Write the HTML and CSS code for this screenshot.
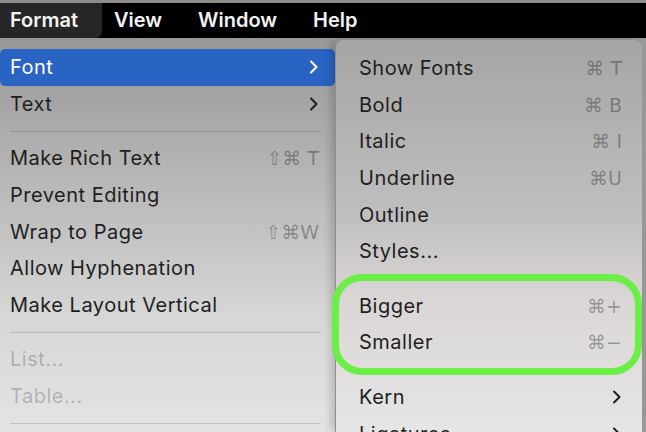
FILE: index.html
```html
<!DOCTYPE html>
<html lang="en">
  <head>
    <meta charset="UTF-8" />
    <meta name="viewport" content="width=device-width, initial-scale=1.0" />
    <title>Format Menu</title>
    <link rel="stylesheet" href="styles.css">
  </head>
  <body>
    <div class="topbar">
      <div class="bar-item active">Format</div>
      <div class="bar-item">View</div>
      <div class="bar-item">Window</div>
      <div class="bar-item">Help</div>
    </div>

    <div class="main">
      <!-- left: Format menu -->
      <div class="menu">
        <div class="row selected">
          <span>Font</span>
          <svg class="chev" width="10" height="14" viewBox="0 0 10 14"><path d="M2 1.5 L7.5 7 L2 12.5" /></svg>
        </div>
        <div class="row">
          <span>Text</span>
          <svg class="chev" width="10" height="14" viewBox="0 0 10 14"><path d="M2 1.5 L7.5 7 L2 12.5" /></svg>
        </div>
        <div class="sep"></div>
        <div class="row"><span>Make Rich Text</span><span class="key">⇧⌘ T</span></div>
        <div class="row"><span>Prevent Editing</span></div>
        <div class="row"><span>Wrap to Page</span><span class="key">⇧⌘W</span></div>
        <div class="row"><span>Allow Hyphenation</span></div>
        <div class="row"><span>Make Layout Vertical</span></div>
        <div class="sep"></div>
        <div class="row disabled"><span>List...</span></div>
        <div class="row disabled"><span>Table...</span></div>
        <div class="sep"></div>
      </div>

      <!-- right: Font submenu -->
      <div class="submenu">
        <div class="row"><span>Show Fonts</span><span class="key">⌘ T</span></div>
        <div class="row"><span>Bold</span><span class="key">⌘ B</span></div>
        <div class="row"><span>Italic</span><span class="key">⌘ I</span></div>
        <div class="row"><span>Underline</span><span class="key">⌘U</span></div>
        <div class="row"><span>Outline</span></div>
        <div class="row"><span>Styles...</span></div>
        <div class="sep"></div>
        <div class="group">
          <div class="row"><span>Bigger</span><span class="key">⌘+</span></div>
          <div class="row"><span>Smaller</span><span class="key">⌘−</span></div>
        </div>
        <div class="sep"></div>
        <div class="row">
          <span>Kern</span>
          <svg class="chev" width="10" height="14" viewBox="0 0 10 14"><path d="M2 1.5 L7.5 7 L2 12.5" /></svg>
        </div>
        <div class="row">
          <span>Ligatures</span>
          <svg class="chev" width="10" height="14" viewBox="0 0 10 14"><path d="M2 1.5 L7.5 7 L2 12.5" /></svg>
        </div>
      </div>
    </div>
  </body>
</html>
```

FILE: styles.css
```css
* {
  box-sizing: border-box;
}
body {
  margin: 0;
  width: 646px;
  height: 432px;
  overflow: hidden;
  background: #9a9a9a;
  font-family: Inter, "Liberation Sans", "DejaVu Sans", sans-serif;
  color: #1e1e1e;
}

/* menu bar */
.topbar {
  display: flex;
  height: 38px;
  border-top: 3px solid #8d8d8d;
  background: #000;
}
.bar-item {
  display: flex;
  align-items: center;
  padding-bottom: 2px;
  margin-right: 36px;
  font-size: 20px;
  font-weight: 600;
  color: #f2f2f2;
}
.bar-item.active {
  padding: 0 24px 2px 10px;
  margin-right: 12px;
  background: #262626;
  border-bottom-right-radius: 7px;
}

.main {
  display: flex;
  height: 394px;
}

.menu {
  width: 335px;
  padding-top: 11px;
  background: linear-gradient(180deg, #979797 0%, #b6b6b6 35%, #d6d6d6 70%, #e4e4e4 100%);
}
.submenu {
  flex: 1;
  margin: 2px 4px 0 0;
  padding-top: 10px;
  border-radius: 8px 8px 0 0;
  border-left: 1px solid #8e8e8e;
  background: linear-gradient(180deg, #a5a5a5 0%, #c0bfbf 45%, #d9d5d4 65%, #e6e6e6 100%);
  box-shadow: -4px 0 8px rgba(0, 0, 0, 0.18);
}

.row {
  display: flex;
  align-items: center;
  justify-content: space-between;
  height: 36.6px;
  font-size: 20px;
  letter-spacing: 0.5px;
}
.menu .row {
  padding: 0 16px 0 10px;
}
.submenu .row {
  padding: 0 20px 0 23px;
}
.row.selected {
  background: #2964c4;
  color: #fff;
  border-radius: 5px;
}
.row.disabled {
  color: rgba(0, 0, 0, 0.22);
}

.key {
  color: rgba(0, 0, 0, 0.32);
  font-family: "DejaVu Sans", Inter, sans-serif;
  font-size: 19px;
  letter-spacing: 0;
}

.chev path {
  fill: none;
  stroke: #1e1e1e;
  stroke-width: 2;
  stroke-linecap: round;
  stroke-linejoin: round;
}
.selected .chev path {
  stroke: #fff;
}

.sep {
  height: 18px;
  display: flex;
  align-items: center;
}
.sep::before {
  content: "";
  flex: 1;
  height: 1px;
  margin: 0 14px 0 10px;
  background: rgba(0, 0, 0, 0.14);
}

/* green annotation round Bigger / Smaller */
.group {
  position: relative;
}
.group::after {
  content: "";
  position: absolute;
  top: -14px;
  bottom: -14px;
  left: -4px;
  right: 0;
  border: 7px solid #6bef47;
  border-radius: 30px;
}
```
